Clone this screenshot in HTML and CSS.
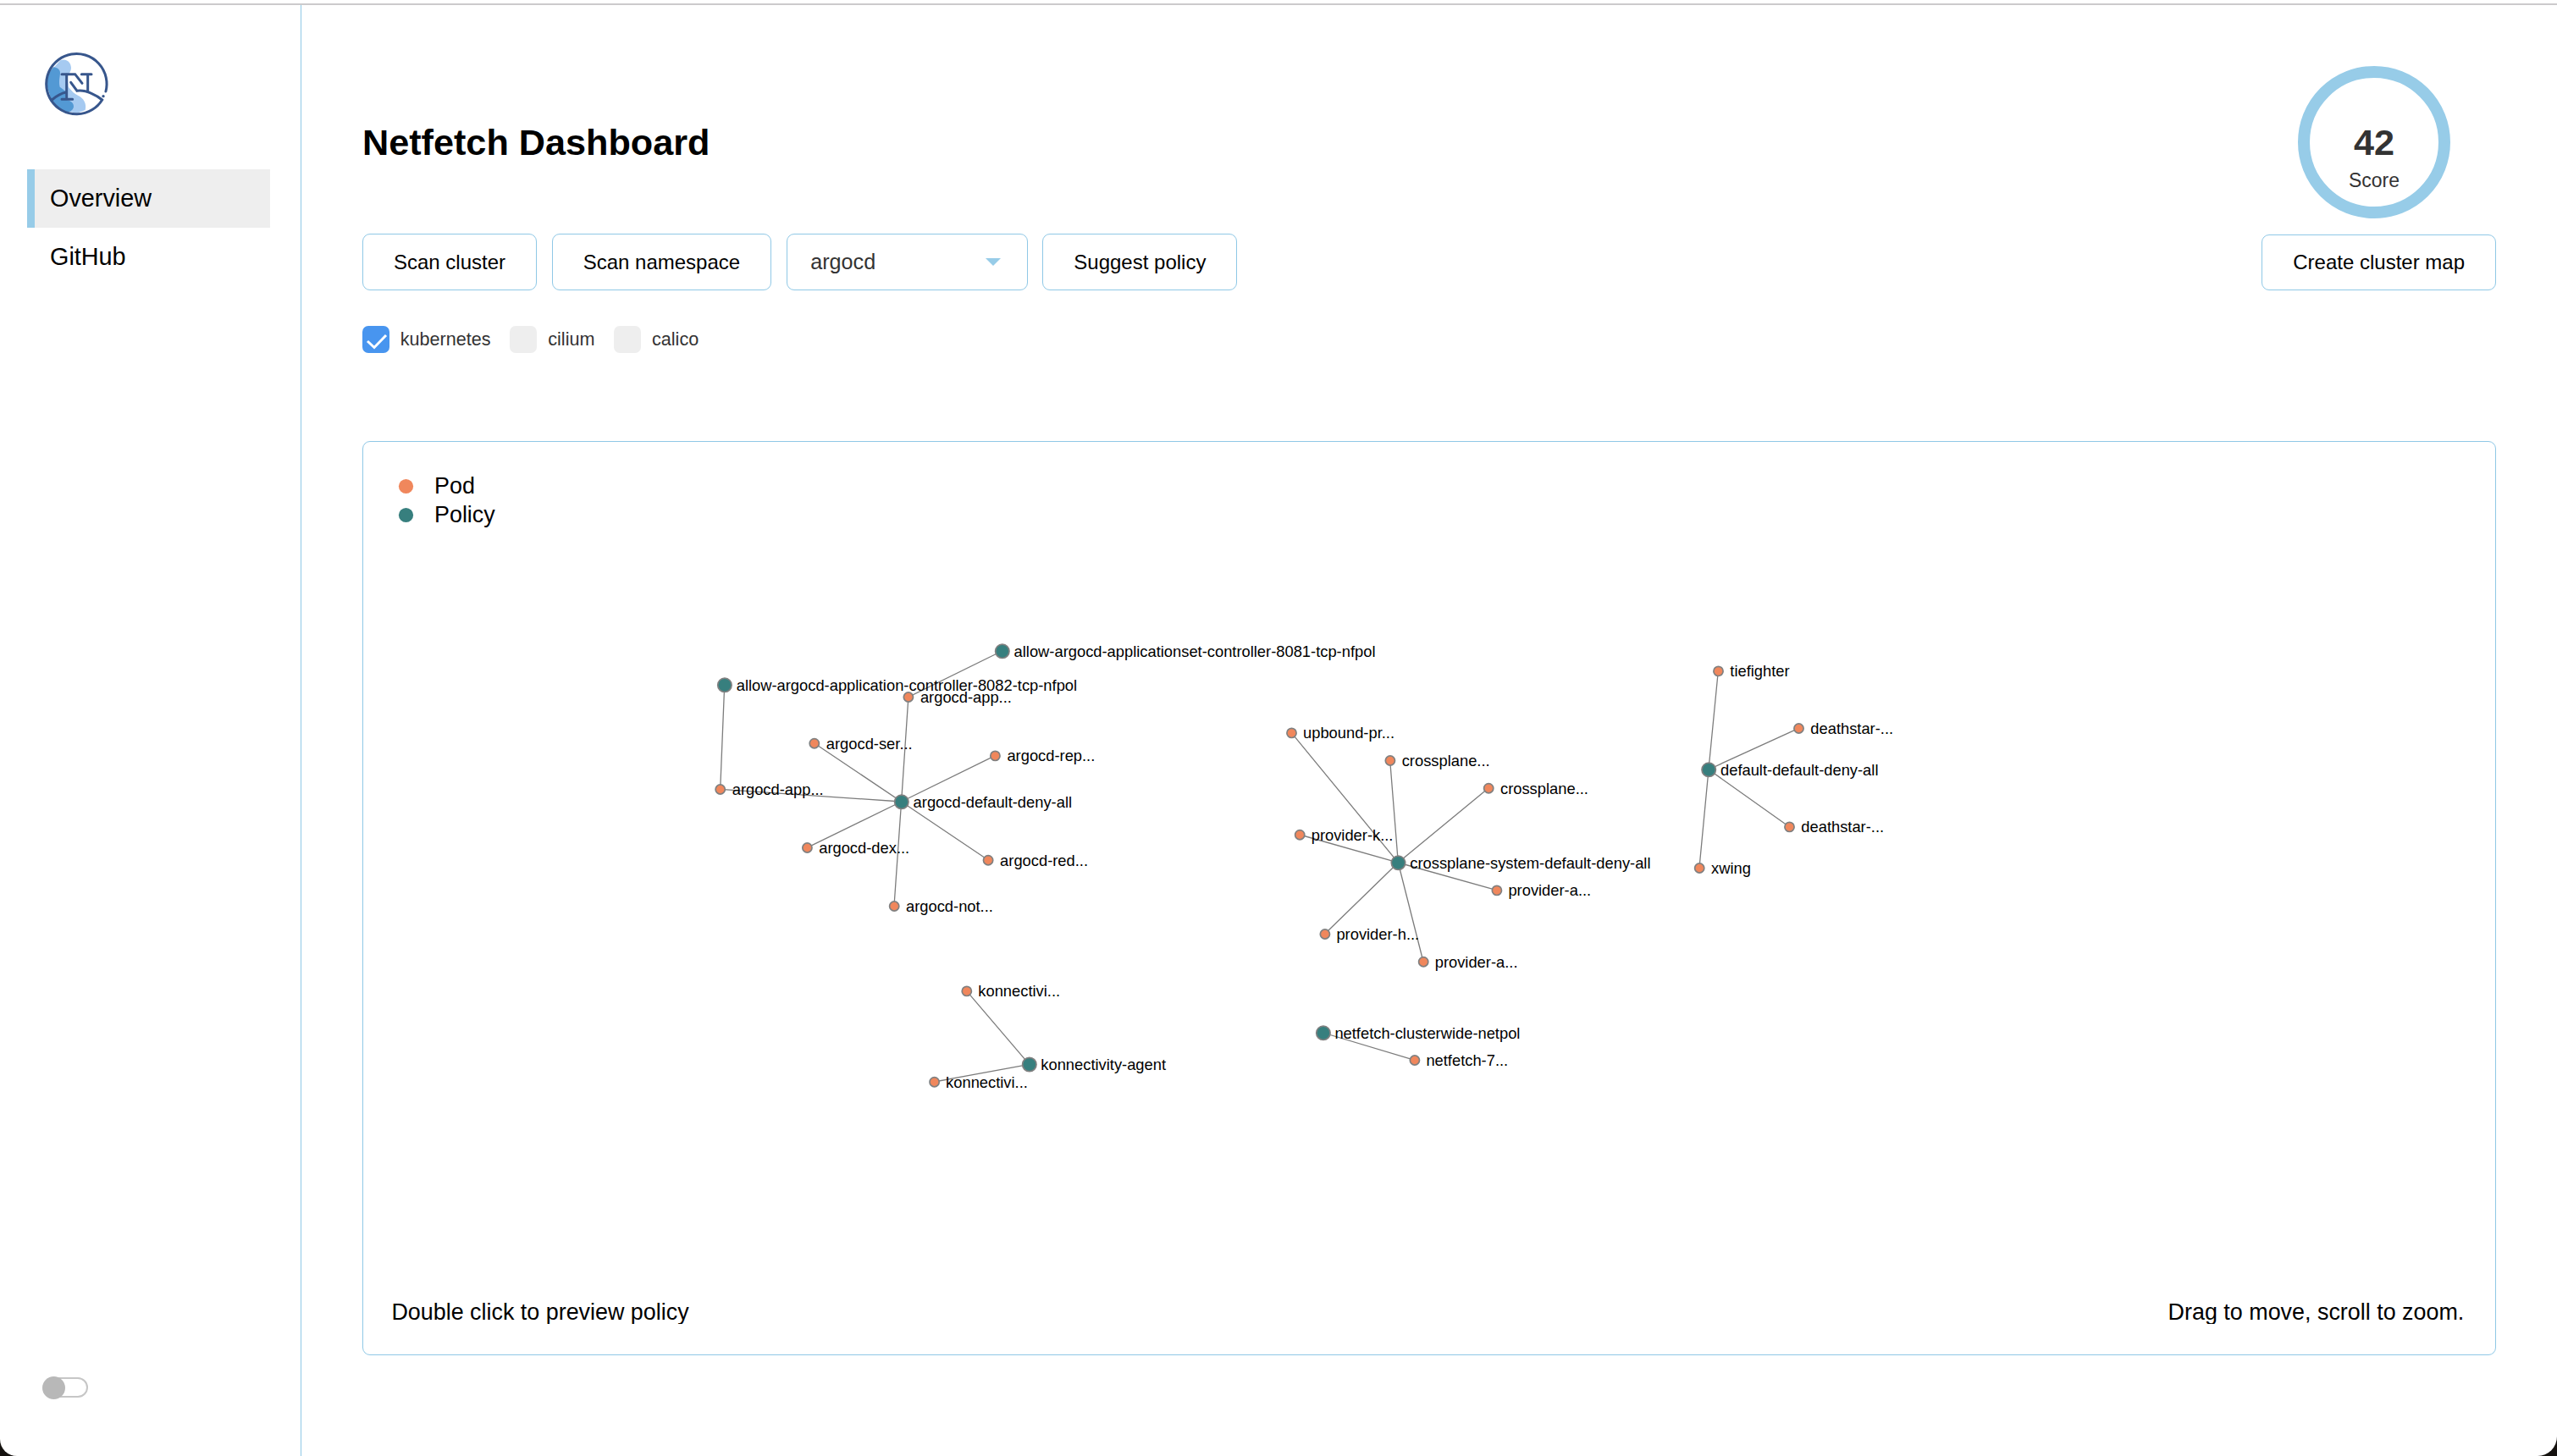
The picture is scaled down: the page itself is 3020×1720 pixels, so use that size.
FILE: index.html
```html
<!DOCTYPE html>
<html lang="en">
<head>
<meta charset="utf-8">
<title>Netfetch Dashboard</title>
<link rel="stylesheet" href="styles.css">
</head>
<body>
<div class="window">
  <aside class="sidebar">
    <svg class="logo" viewBox="0 0 240 240" aria-label="Netfetch">
      <path fill="#a6caf1" d="M64 34C82 26 101 38 102 60C102 78 88 82 91 104C94 130 100 144 126 158C146 168 158 186 152 210L121 222L60 204L30 180L40 60Z"/>
      <path fill="#5399d4" d="M40 58C52 60 63 66 63 78C63 92 57 106 62 128L86 146L80 174C94 174 112 182 111 198C110 208 100 216 90 218L60 204L32 174L15 120C16 94 26 70 40 58Z"/>
      <path fill="#fff" d="M91 84H111L140 134L130 145C112 146 96 138 92 126Z"/>
      <g fill="none" stroke="#37568c" stroke-width="9" stroke-linecap="round">
        <path d="M224.800 144A107 107 0 1 0 212 174C196 160 156 137 123 142L101 112"/>
        <path d="M34 174C50 160 68 150 84 147"/>
        <path d="M69 83H116L141 115"/>
        <path d="M139 83H174M161 85V142"/>
        <path d="M86 85V171M69 172H107"/>
      </g>
      <circle cx="216" cy="161" r="5" fill="#37568c"/>
    </svg>
    <nav class="nav">
      <a class="nav-item active">Overview</a>
      <a class="nav-item">GitHub</a>
    </nav>
    <div class="switch"><span class="knob"></span></div>
  </aside>
  <main class="main">
    <header class="header">
      <h1 class="title">Netfetch Dashboard</h1>
      <div class="score"><strong class="score-value">42</strong><span class="score-label">Score</span></div>
    </header>
    <div class="toolbar">
      <button class="btn">Scan cluster</button>
      <button class="btn">Scan namespace</button>
      <div class="select">argocd<span class="caret"></span></div>
      <button class="btn">Suggest policy</button>
      <button class="btn map-btn">Create cluster map</button>
    </div>
    <div class="filters">
      <label class="check"><span class="box on"><svg class="tick" viewBox="0 0 32 32"><path d="M6 18L14 25.500L28 11"/></svg></span>kubernetes</label>
      <label class="check"><span class="box"></span>cilium</label>
      <label class="check"><span class="box"></span>calico</label>
    </div>
    <section class="panel">
      <svg class="graph" viewBox="429 522 2518 1042">
        <g class="legend">
          <circle class="pod-key" cx="479.500" cy="574.500" r="8.600"/><text x="513" y="583">Pod</text>
          <circle class="policy-key" cx="479.500" cy="608.500" r="8.600"/><text x="513" y="617">Policy</text>
        </g>
        <g class="links">
          <path d="M1183.600 769L1072.900 823.300L1064.600 947L961.800 878M1064.600 947L1175.400 892.700M1064.600 947L953.200 1001.300M1064.600 947L1167.100 1016M1064.600 947L1056 1070.300M1064.600 947L850.700 932.300L855.700 809"/>
          <path d="M1651.300 1019L1525.300 865.700M1651.300 1019L1641.700 898.300M1651.300 1019L1758 931M1651.300 1019L1535 986M1651.300 1019L1767.700 1051.700M1651.300 1019L1564.700 1103.300M1651.300 1019L1681 1136"/>
          <path d="M2018 909L2029.300 792.700M2018 909L2124.300 860.300M2018 909L2113.300 976.700M2018 909L2007 1025.300"/>
          <path d="M1215.600 1257.300L1141.600 1170.700M1215.600 1257.300L1103.400 1278M1562.700 1220L1670.700 1252.300"/>
        </g>
        <g class="policies">
          <circle cx="1183.800" cy="769.300" r="8.200"/><circle cx="855.900" cy="809.300" r="8.200"/><circle cx="1064.800" cy="947.300" r="8.200"/>
          <circle cx="1651.500" cy="1019.300" r="8.200"/><circle cx="2018.200" cy="909.300" r="8.200"/><circle cx="1215.800" cy="1257.500" r="8.200"/><circle cx="1562.900" cy="1220.300" r="8.200"/>
        </g>
        <g class="pods">
          <circle cx="1072.900" cy="823.500" r="5.600"/><circle cx="961.800" cy="878.200" r="5.600"/><circle cx="1175.400" cy="892.900" r="5.600"/><circle cx="850.700" cy="932.500" r="5.600"/>
          <circle cx="953.400" cy="1001.500" r="5.600"/><circle cx="1167.100" cy="1016.200" r="5.600"/><circle cx="1056.200" cy="1070.500" r="5.600"/>
          <circle cx="1525.500" cy="865.900" r="5.600"/><circle cx="1641.900" cy="898.500" r="5.600"/><circle cx="1758.200" cy="931.200" r="5.600"/><circle cx="1535.200" cy="986.200" r="5.600"/>
          <circle cx="1767.900" cy="1051.900" r="5.600"/><circle cx="1564.900" cy="1103.500" r="5.600"/><circle cx="1681.200" cy="1136.200" r="5.600"/>
          <circle cx="2029.500" cy="792.900" r="5.600"/><circle cx="2124.500" cy="860.500" r="5.600"/><circle cx="2113.500" cy="976.900" r="5.600"/><circle cx="2007.200" cy="1025.500" r="5.600"/>
          <circle cx="1141.800" cy="1170.900" r="5.600"/><circle cx="1103.600" cy="1278.200" r="5.600"/><circle cx="1670.900" cy="1252.500" r="5.600"/>
        </g>
        <g class="labels" transform="translate(0.500 0.300)">
          <text x="1197.100" y="775.300">allow-argocd-applicationset-controller-8081-tcp-nfpol</text>
          <text x="869.200" y="815.300">allow-argocd-application-controller-8082-tcp-nfpol</text>
          <text x="1086.400" y="829.600">argocd-app...</text>
          <text x="975.300" y="884.300">argocd-ser...</text>
          <text x="1188.900" y="899">argocd-rep...</text>
          <text x="1078.100" y="953.300">argocd-default-deny-all</text>
          <text x="864.200" y="938.600">argocd-app...</text>
          <text x="966.700" y="1007.600">argocd-dex...</text>
          <text x="1180.600" y="1022.300">argocd-red...</text>
          <text x="1069.500" y="1076.600">argocd-not...</text>
          <text x="1538.500" y="872">upbound-pr...</text>
          <text x="1655.200" y="904.600">crossplane...</text>
          <text x="1771.500" y="937.300">crossplane...</text>
          <text x="1548.200" y="992.300">provider-k...</text>
          <text x="1664.800" y="1025.300">crossplane-system-default-deny-all</text>
          <text x="1780.900" y="1058">provider-a...</text>
          <text x="1577.900" y="1109.600">provider-h...</text>
          <text x="1694.200" y="1142.300">provider-a...</text>
          <text x="2042.800" y="799">tiefighter</text>
          <text x="2137.800" y="866.600">deathstar-...</text>
          <text x="2031.500" y="915.300">default-default-deny-all</text>
          <text x="2126.800" y="983">deathstar-...</text>
          <text x="2020.500" y="1031.600">xwing</text>
          <text x="1154.800" y="1177">konnectivi...</text>
          <text x="1228.800" y="1263.600">konnectivity-agent</text>
          <text x="1116.600" y="1284.300">konnectivi...</text>
          <text x="1575.900" y="1226.300">netfetch-clusterwide-netpol</text>
          <text x="1683.900" y="1258.600">netfetch-7...</text>
        </g>
        <g class="hints">
          <text x="462.400" y="1559">Double click to preview policy</text>
          <text x="2910.300" y="1559" text-anchor="end">Drag to move, scroll to zoom.</text>
        </g>
      </svg>
    </section>
  </main>
</div>
</body>
</html>
```
FILE: styles.css
```css
* { box-sizing: border-box; }
html { background: #15120f; }
body {
  margin: 0;
  font-family: "Liberation Sans", Arial, sans-serif;
  color: #000;
}
.window {
  display: flex;
  width: 3020px;
  height: 1720px;
  padding-top: 6px;
  overflow: hidden;
  background: linear-gradient(#fff 4px, #cccacc 4px, #cccacc 6px, #fff 6px);
  border-radius: 0 0 23px 20px;
}
.sidebar {
  display: flex;
  flex-direction: column;
  width: 356px;
  flex: none;
  padding: 54px 36px 67px 32px;
  border-right: 1px solid #8fc8e6;
}
.logo { width: 80px; height: 80px; margin-left: 18px; flex: none; }
.nav { display: flex; flex-direction: column; margin-top: 60px; }
.nav-item {
  height: 69px;
  padding-left: 18px;
  border-left: 9px solid transparent;
  font-size: 28.8px;
  line-height: 69px;
}
.nav-item.active { background: #eee; border-left-color: #97cce8; }
.switch {
  display: flex;
  align-items: center;
  width: 52px;
  height: 24px;
  margin: auto 0 2px 20px;
  border: 2px solid #c6c6c6;
  border-radius: 12px;
}
.knob {
  flex: none;
  width: 27px;
  height: 27px;
  margin-left: -4px;
  border-radius: 50%;
  background: #b8b8b8;
}
.main { flex: 1; padding: 72px 72px 0; }
.header {
  display: flex;
  align-items: center;
  justify-content: space-between;
  padding-right: 54px;
}
.title { margin: 0; font-size: 43.2px; line-height: 50px; }
.score {
  display: flex;
  flex-direction: column;
  align-items: center;
  width: 180px;
  height: 180px;
  padding-top: 54px;
  border: 14px solid #97cce8;
  border-radius: 50%;
  color: #333;
}
.score-value { font-size: 43.2px; line-height: 44px; }
.score-label { margin-top: 8px; font-size: 23px; line-height: 30px; }
.toolbar { display: flex; align-items: flex-end; gap: 17.6px; margin-top: 18px; }
.btn, .select {
  height: 67px;
  border: 1px solid #8fc8e6;
  border-radius: 9px;
  background: #fff;
}
.btn {
  padding: 0 36px;
  font-family: inherit;
  font-size: 24px;
  color: #000;
  white-space: nowrap;
}
.map-btn { height: 66px; margin-left: auto; }
.select {
  display: flex;
  align-items: center;
  justify-content: space-between;
  width: 285px;
  padding: 0 31px 0 27.500px;
  font-size: 25.2px;
  color: #333;
}
.caret {
  border: 9px solid transparent;
  border-top-color: #97cce8;
  border-bottom: 0;
}
.filters { display: flex; gap: 22.800px; margin-top: 42px; }
.check {
  display: flex;
  align-items: center;
  gap: 12.800px;
  height: 32px;
  font-size: 21.6px;
  color: #333;
}
.box { width: 32px; height: 32px; border-radius: 7px; background: #eee; }
.box.on { background: #4895ef; }
.tick { display: block; width: 32px; height: 32px; }
.tick path { fill: none; stroke: #fff; stroke-width: 3; }
.panel {
  height: 1080px;
  margin-top: 104px;
  border: 1px solid #8fc8e6;
  border-radius: 9px;
}
.graph { display: block; width: 2518px; height: 1042px; }
.legend, .hints { font-size: 26.9px; }
.pod-key { fill: #f0875c; }
.policy-key { fill: #377f7e; }
.links { fill: none; stroke: #7c7c7c; stroke-width: 1.3; }
.policies { fill: #377f7e; stroke: #808080; stroke-width: 1.7; }
.pods { fill: #f0875c; stroke: #808080; stroke-width: 1.7; }
.labels { font-size: 18.33px; }
```
